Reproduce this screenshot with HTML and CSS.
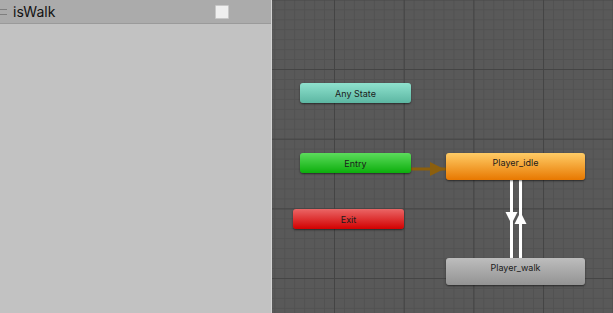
FILE: index.html
```html
<!DOCTYPE html>
<html lang="en">

<head>
    <meta charset="UTF-8" />
    <meta name="viewport" content="width=device-width, initial-scale=1.0" />
    <title>Animator</title>
    <link rel="stylesheet" href="styles.css">
</head>

<body>
    <!-- Parameters list -->
    <div class="params">
        <div class="param-row">
            <span class="handle"></span>
            <span class="param-name">isWalk</span>
            <span class="checkbox"></span>
        </div>
    </div>

    <!-- State machine graph -->
    <div class="graph">
        <svg class="links" width="341" height="313" viewBox="272 0 341 313">
            <line x1="411" y1="169" x2="446" y2="169" stroke="#8c5f0d" stroke-width="3" />
            <polygon points="430,162 444,169 430,176" fill="#8c5f0d" />

            <line x1="511.5" y1="180" x2="511.5" y2="258" stroke="#fff" stroke-width="3" />
            <polygon points="505.5,212 517.5,212 511.5,224" fill="#fff" />

            <line x1="520.5" y1="180" x2="520.5" y2="258" stroke="#fff" stroke-width="3" />
            <polygon points="514.5,224 526.5,224 520.5,212" fill="#fff" />
        </svg>

        <div class="node any" style="left: 28px; top: 83px;">Any State</div>
        <div class="node entry" style="left: 28px; top: 153px;">Entry</div>
        <div class="node exit" style="left: 21px; top: 209px;">Exit</div>
        <div class="node state idle" style="left: 174px; top: 153px;">Player_idle</div>
        <div class="node state walk" style="left: 174px; top: 258px;">Player_walk</div>
    </div>
</body>

</html>
```

FILE: styles.css
```css
body {
    margin: 0;
    display: flex;
    height: 313px;
    overflow: hidden;
    font-family: Inter, 'Noto Sans', sans-serif;
}

.params {
    width: 271px;
    background: #c2c2c2;
    border-right: 1px solid #d4d4d4;
}

.param-row {
    display: flex;
    align-items: center;
    height: 23px;
    background: #ababab;
    border-bottom: 1px solid #9a9a9a;
}

.handle {
    width: 7px;
    height: 4px;
    border-top: 1px solid #7e7e7e;
    border-bottom: 1px solid #7e7e7e;
    margin-right: 6px;
}

.param-name {
    flex: 1;
    font-size: 14px;
    color: #111;
}

.checkbox {
    width: 12px;
    height: 12px;
    background: #efefef;
    border: 1px solid #c8c8c8;
    border-radius: 1px;
    margin-right: 42px;
}

.graph {
    position: relative;
    flex: 1;
    background-color: #595959;
    background-image:
        linear-gradient(90deg, #444 1px, transparent 1px),
        linear-gradient(#444 1px, transparent 1px),
        linear-gradient(90deg, #525252 1px, transparent 1px),
        linear-gradient(#525252 1px, transparent 1px);
    background-size: 69.7px 69.7px, 69.7px 69.7px, 9.957px 9.957px, 9.957px 9.957px;
    background-position: 62px 69px, 62px 69px, 62px 69px, 62px 69px;
}

.links {
    position: absolute;
    top: 0;
    left: 0;
}

.node {
    position: absolute;
    width: 111px;
    height: 20px;
    display: flex;
    align-items: center;
    justify-content: center;
    border-radius: 3px;
    font-size: 9px;
    color: #1b1b1b;
    box-shadow: 0 1px 2px rgba(0, 0, 0, 0.55);
}

.node.state {
    width: 139px;
    height: 27px;
    align-items: flex-start;
    padding-top: 4px;
    box-sizing: border-box;
}

.any {
    background: linear-gradient(#8fe2ce, #5cb6a2);
}

.entry {
    background: linear-gradient(#5cdc5c, #0cae0c);
}

.exit {
    background: linear-gradient(#ea6666, #d20000);
}

.idle {
    background: linear-gradient(#ffcc66, #e87800);
}

.walk {
    background: linear-gradient(#bdbdbd, #939393);
}
```
